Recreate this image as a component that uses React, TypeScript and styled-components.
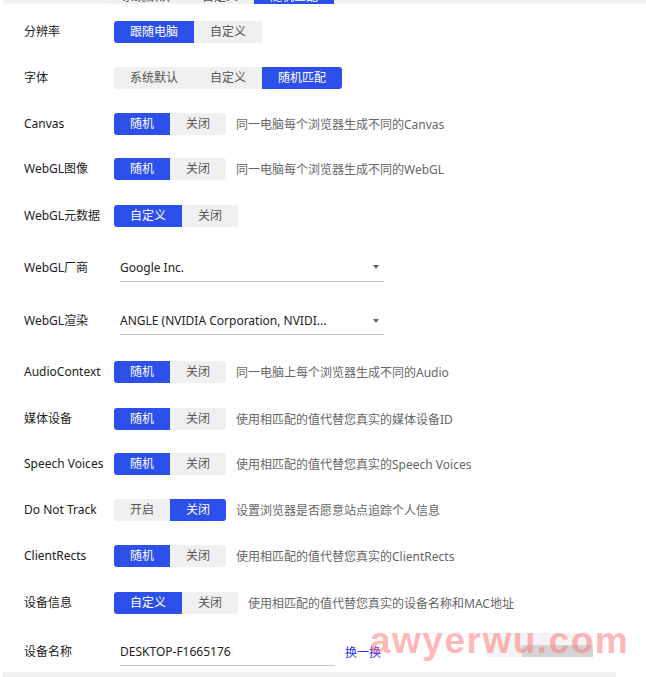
import React from "react";
import styled, { createGlobalStyle } from "styled-components";

const Global = createGlobalStyle`
  html, body { margin: 0; padding: 0; background: #fff; }
  body { font-family: "Noto Sans", "Noto Sans CJK SC", sans-serif; }
  * { box-sizing: border-box; }
`;

const Page = styled.div`
  position: relative;
  width: 646px;
  height: 677px;
  overflow: hidden;
  background: #fff;
`;

const TopClip = styled.div`
  height: 4px;
  overflow: hidden;
  background: linear-gradient(#efefef, #f7f7f7);
  margin: 0 0 5px 3px;
`;

const TopInner = styled.div`
  margin-top: -14px;
  padding-left: 103px;
  display: flex;
  align-items: center;
  height: 22px;
`;

const Form = styled.div`
  display: flex;
  flex-direction: column;
`;

const Row = styled.div<{ $h: number }>`
  height: ${(p) => p.$h}px;
  display: flex;
  align-items: center;
  padding-left: 24px;
`;

const Label = styled.div`
  width: 90px;
  flex: none;
  font-size: 12px;
  color: #222;
  line-height: 16px;
  white-space: nowrap;
`;

const Seg = styled.div`
  display: flex;
  height: 22px;
  border-radius: 3px;
  overflow: hidden;
  background: #f0f0f0;
  flex: none;
`;

const SegBtn = styled.div<{ $on?: boolean }>`
  padding: 0 16px;
  height: 22px;
  line-height: 22px;
  font-size: 12px;
  white-space: nowrap;
  background: ${(p) => (p.$on ? "#2d50ec" : "transparent")};
  color: ${(p) => (p.$on ? "#fff" : "#555")};
`;

const Desc = styled.div`
  margin-left: 10px;
  font-size: 12px;
  color: #666;
  white-space: nowrap;
`;

const Field = styled.div<{ $w: number }>`
  margin-left: 6px;
  width: ${(p) => p.$w}px;
  height: 28px;
  display: flex;
  align-items: center;
  justify-content: space-between;
  border-bottom: 1px solid #c6c6c6;
  padding-right: 5px;
  font-size: 12px;
  color: #222;
  white-space: nowrap;
`;

const Caret = styled.span`
  width: 0;
  height: 0;
  border-left: 3.5px solid transparent;
  border-right: 3.5px solid transparent;
  border-top: 4px solid #666;
`;

const Link = styled.span`
  margin-left: 10px;
  font-size: 12px;
  color: #2a2ef0;
`;

const BottomBar = styled.div`
  position: absolute;
  left: 3px;
  bottom: 0;
  width: 613px;
  height: 5px;
  background: linear-gradient(#f4f4f4, #ececec);
`;

const Smudge = styled.div`
  position: absolute;
  left: 487px;
  top: 633px;
  width: 106px;
  height: 24px;
  background: #f4f4f4;
`;

const SmudgeDark = styled.div`
  position: absolute;
  left: 522px;
  top: 645px;
  width: 71px;
  height: 12px;
  background: #d4d4d4;
`;

const Watermark = styled.div`
  position: absolute;
  left: 370px;
  top: 619px;
  font-family: "Liberation Sans", "DejaVu Sans", sans-serif;
  font-weight: 700;
  font-size: 37px;
  letter-spacing: 1.5px;
  color: rgba(255, 120, 120, 0.55);
  line-height: 44px;
  pointer-events: none;
`;

type Opt = { t: string; on?: boolean };

const Segs = ({ opts }: { opts: Opt[] }) => (
  <Seg>
    {opts.map((o) => (
      <SegBtn key={o.t} $on={o.on}>
        {o.t}
      </SegBtn>
    ))}
  </Seg>
);

const rand: Opt[] = [{ t: "随机", on: true }, { t: "关闭" }];
const custom: Opt[] = [{ t: "自定义", on: true }, { t: "关闭" }];
const fonts: Opt[] = [{ t: "系统默认" }, { t: "自定义" }, { t: "随机匹配", on: true }];

export default function App() {
  return (
    <Page>
      <Global />
      <TopClip>
        <TopInner>
          <Segs opts={fonts} />
        </TopInner>
      </TopClip>
      <Form>
        <Row $h={46}>
          <Label>分辨率</Label>
          <Segs opts={[{ t: "跟随电脑", on: true }, { t: "自定义" }]} />
        </Row>
        <Row $h={46}>
          <Label>字体</Label>
          <Segs opts={fonts} />
        </Row>
        <Row $h={45.75}>
          <Label>Canvas</Label>
          <Segs opts={rand} />
          <Desc>同一电脑每个浏览器生成不同的Canvas</Desc>
        </Row>
        <Row $h={45.25}>
          <Label>WebGL图像</Label>
          <Segs opts={rand} />
          <Desc>同一电脑每个浏览器生成不同的WebGL</Desc>
        </Row>
        <Row $h={48.75}>
          <Label>WebGL元数据</Label>
          <Segs opts={custom} />
        </Row>
        <Row $h={53.75}>
          <Label>WebGL厂商</Label>
          <Field $w={264}>
            <span>Google Inc.</span>
            <Caret />
          </Field>
        </Row>
        <Row $h={53}>
          <Label>WebGL渲染</Label>
          <Field $w={264}>
            <span>ANGLE (NVIDIA Corporation, NVIDI...</span>
            <Caret />
          </Field>
        </Row>
        <Row $h={48.25}>
          <Label>AudioContext</Label>
          <Segs opts={rand} />
          <Desc>同一电脑上每个浏览器生成不同的Audio</Desc>
        </Row>
        <Row $h={45.5}>
          <Label>媒体设备</Label>
          <Segs opts={rand} />
          <Desc>使用相匹配的值代替您真实的媒体设备ID</Desc>
        </Row>
        <Row $h={45.75}>
          <Label>Speech Voices</Label>
          <Segs opts={rand} />
          <Desc>使用相匹配的值代替您真实的Speech Voices</Desc>
        </Row>
        <Row $h={46}>
          <Label>Do Not Track</Label>
          <Segs opts={[{ t: "开启" }, { t: "关闭", on: true }]} />
          <Desc>设置浏览器是否愿意站点追踪个人信息</Desc>
        </Row>
        <Row $h={45.75}>
          <Label>ClientRects</Label>
          <Segs opts={rand} />
          <Desc>使用相匹配的值代替您真实的ClientRects</Desc>
        </Row>
        <Row $h={48}>
          <Label>设备信息</Label>
          <Segs opts={custom} />
          <Desc>使用相匹配的值代替您真实的设备名称和MAC地址</Desc>
        </Row>
        <Row $h={50.5}>
          <Label>设备名称</Label>
          <Field $w={215}>
            <span>DESKTOP-F1665176</span>
          </Field>
          <Link>换一换</Link>
        </Row>
      </Form>
      <BottomBar />
      <Smudge />
      <SmudgeDark />
      <Watermark>awyerwu.com</Watermark>
    </Page>
  );
}
